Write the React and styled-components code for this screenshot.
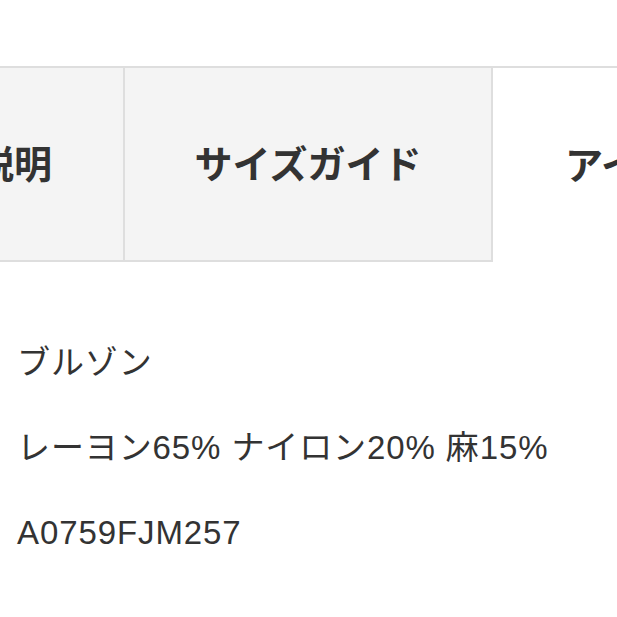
import React from "react";
import styled, { createGlobalStyle } from "styled-components";

const Global = createGlobalStyle`
  html, body { margin: 0; padding: 0; background: #fff; }
  body { font-family: "Noto Sans CJK JP", "Noto Sans", sans-serif; color: #333; }
`;

const Page = styled.div`
  width: 617px;
  height: 617px;
  overflow: hidden;
  padding-top: 66px;
  box-sizing: border-box;
`;

const TabBar = styled.div`
  display: flex;
  margin-left: -243px;
  border-top: 2px solid #dedede;
  height: 196px;
  box-sizing: border-box;
`;

const Tab = styled.div`
  flex: 0 0 368px;
  display: flex;
  align-items: center;
  justify-content: center;
  box-sizing: border-box;
  padding-bottom: 5px;
  font-size: 38px;
  font-weight: 700;
  color: #333;
  background: ${(p) => (p.$active ? "#fff" : "#f4f4f4")};
  border-right: ${(p) => (p.$active ? "none" : "2px solid #dedede")};
  border-bottom: ${(p) => (p.$active ? "none" : "2px solid #dedede")};
`;

const Content = styled.div`
  display: flex;
  flex-direction: column;
  gap: 45px;
  padding: 81px 0 0 17px;
`;

const Line = styled.div`
  font-family: "Liberation Sans", "Noto Sans CJK JP", sans-serif;
  font-size: 33px;
  letter-spacing: 0.9px;
  line-height: 40px;
  color: #333;
  white-space: nowrap;
`;

export default function App() {
  return (
    <>
      <Global />
      <Page>
        <TabBar>
          <Tab>アイテム説明</Tab>
          <Tab>サイズガイド</Tab>
          <Tab $active>アイテム詳細</Tab>
        </TabBar>
        <Content>
          <Line>ブルゾン</Line>
          <Line>レーヨン65% ナイロン20% 麻15%</Line>
          <Line>A0759FJM257</Line>
        </Content>
      </Page>
    </>
  );
}
